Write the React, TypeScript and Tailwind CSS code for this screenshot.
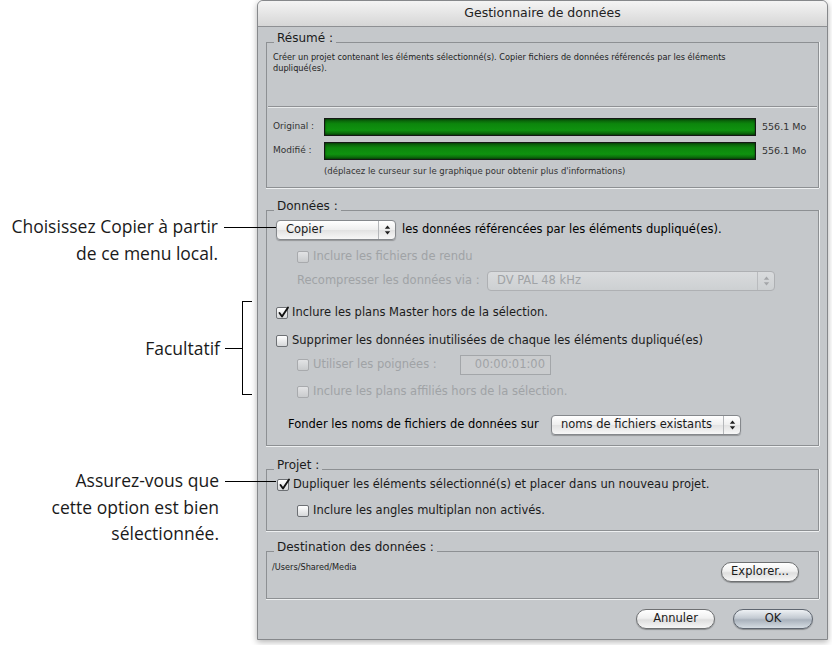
import React from "react";

// dialog font stand-in for Lucida Grande
const ui = "font-['DejaVu_Sans',sans-serif]";

function Check({ checked = false, disabled = false }: { checked?: boolean; disabled?: boolean }) {
  return (
    <span
      className={`relative inline-block w-[12px] h-[12px] shrink-0 rounded-[2px] border ${
        disabled
          ? "border-[#a8aaad] bg-[linear-gradient(to_bottom,#e2e3e5,#c9cbcd)]"
          : "border-[#6d7074] bg-[linear-gradient(to_bottom,#ffffff,#d6d8da)]"
      }`}
    >
      {checked && (
        <svg className="absolute left-[0px] top-[-2px]" width="13" height="13" viewBox="0 0 13 13">
          <path d="M2.5 7 L5 10.5 L11 1.5" stroke="#111" strokeWidth="1.9" fill="none" strokeLinecap="round" strokeLinejoin="round" />
        </svg>
      )}
    </span>
  );
}

function CheckRow({ label, checked, disabled, className = "" }: { label: string; checked?: boolean; disabled?: boolean; className?: string }) {
  return (
    <div className={`flex items-center h-[16px] gap-[4px] ${className}`}>
      <Check checked={checked} disabled={disabled} />
      <span className={`whitespace-nowrap ${disabled ? "text-[#a0a3a6]" : "text-[#1b1b1b]"}`}>{label}</span>
    </div>
  );
}

function Arrows({ disabled = false }: { disabled?: boolean }) {
  const c = disabled ? "#a3a5a8" : "#1e1e1e";
  return (
    <svg width="7" height="10" viewBox="0 0 7 10">
      <polygon points="3.5,0.5 0.8,3.8 6.2,3.8" fill={c} />
      <polygon points="0.8,6.2 6.2,6.2 3.5,9.5" fill={c} />
    </svg>
  );
}

function Popup({ label, className, disabled = false }: { label: string; className: string; disabled?: boolean }) {
  return (
    <div
      className={`flex items-stretch h-[20px] shrink-0 rounded-[4px] border ${className} ${
        disabled
          ? "border-[#aeb0b3] bg-[linear-gradient(to_bottom,#d9dbdd,#cdd0d2)] text-[#a0a3a6]"
          : "border-[#85888c] bg-[linear-gradient(to_bottom,#ffffff,#eeeeee_50%,#e2e2e2_51%,#f7f7f7)] text-[#1b1b1b] shadow-[0_1px_1px_rgba(0,0,0,0.25)]"
      }`}
    >
      <span className="flex-1 flex items-center pl-[9px] whitespace-nowrap overflow-hidden">{label}</span>
      <span className={`w-[17px] flex items-center justify-center border-l ${disabled ? "border-[#b9bbbe]" : "border-[#b5b7ba]"}`}>
        <Arrows disabled={disabled} />
      </span>
    </div>
  );
}

function PillButton({ label, className, def = false }: { label: string; className: string; def?: boolean }) {
  return (
    <div
      className={`h-[20px] flex items-center justify-center rounded-full border text-[11.5px] text-[#1b1b1b] ${className} ${
        def
          ? "border-[#5f6670] bg-[linear-gradient(to_bottom,#eef1f4,#c3cad2_45%,#a9b2bc_55%,#d5dce2)]"
          : "border-[#6e7072] bg-[linear-gradient(to_bottom,#ffffff,#f0f0f0_45%,#dedede_55%,#f6f6f6)]"
      } shadow-[0_1px_1px_rgba(0,0,0,0.3)]`}
    >
      {label}
    </div>
  );
}

function Group({ title, className = "", children }: { title: string; className?: string; children: React.ReactNode }) {
  return (
    <fieldset className={`border border-[#8d9093] shadow-[0_1px_0_#eef0f1,1px_0_0_#eef0f1] ${className}`}>
      <legend className="ml-[7px] px-[3px] pb-[8px] text-[12px] leading-[12px] text-[#1b1b1b]">{title}</legend>
      {children}
    </fieldset>
  );
}

function Meter({ label }: { label: string }) {
  return (
    <div className="flex items-center h-[18px]">
      <span className="w-[51px] text-[9px] text-[#333] whitespace-nowrap">{label}</span>
      <div className="flex-1 h-full border border-[#151815] bg-[linear-gradient(to_bottom,#095409,#0c860c_30%,#0f920f_70%,#095409)] shadow-[inset_0_0_2px_#042604]" />
      <span className="w-[56px] pl-[6px] text-[9.5px] text-[#333] whitespace-nowrap">556.1 Mo</span>
    </div>
  );
}

function Callouts() {
  return (
    <div className="w-[257px] shrink-0 flex flex-col text-right text-[17.5px] text-[#1a1a1a] font-['Open_Sans',sans-serif] relative z-10">
      <div className="mt-[213px] pr-[39px] leading-[27px]">
        <div className="relative">
          Choisissez Copier à partir
          <span className="absolute top-[14px] left-[calc(100%+6px)] w-[52px] h-px bg-black" />
        </div>
        <div>de ce menu local.</div>
      </div>

      <div className="mt-[34px] h-[94px] pr-[5px] flex items-center justify-end">
        <span>Facultatif</span>
        <span className="ml-[5px] w-[17px] h-px bg-black" />
        <span className="w-[10px] h-full border-l border-y border-black" />
      </div>

      <div className="mt-[72px] pr-[38px] leading-[26.5px]">
        <div className="relative">
          Assurez-vous que
          <span className="absolute top-[14px] left-[calc(100%+6px)] w-[51px] h-px bg-black" />
        </div>
        <div>cette option est bien</div>
        <div>sélectionnée.</div>
      </div>
    </div>
  );
}

function Window() {
  return (
    <div className={`w-[571px] h-[640px] shrink-0 flex flex-col rounded-t-[6px] border border-[#86888b] bg-[#c5c8cb] shadow-[0_2px_6px_rgba(0,0,0,0.3)] text-[11.5px] ${ui}`}>
      <div className="h-[26px] shrink-0 rounded-t-[5px] border-b border-[#8e9093] bg-[linear-gradient(to_bottom,#f4f4f4,#d6d6d6)] flex items-center justify-center text-[12.5px] text-[#222]">
        Gestionnaire de données
      </div>

      <div className="pl-[8px] pr-[8px] pt-[5px] flex flex-col">
        <Group title="Résumé :">
          <div className="px-[6px] pb-[10px]">
            <p className="text-[8.2px] leading-[11px] text-[#222] whitespace-nowrap">
              Créer un projet contenant les éléments sélectionné(s). Copier fichiers de données référencés par les éléments
              <br />
              dupliqué(es).
            </p>
            <div className="-mx-[5px] mt-[32px] h-px bg-[#8f9194] shadow-[0_1px_0_#e9ebec]" />
            <div className="mt-[11px]">
              <Meter label="Original :" />
            </div>
            <div className="mt-[6px]">
              <Meter label="Modifié :" />
            </div>
            <p className="mt-[6px] pl-[51px] text-[8.5px] leading-[11px] text-[#333] whitespace-nowrap">
              (déplacez le curseur sur le graphique pour obtenir plus d'informations)
            </p>
          </div>
        </Group>

        <Group title="Données :" className="mt-[12px]">
          <div className="px-[9px] pb-[10px]">
            <div className="flex items-center h-[20px] gap-[6px]">
              <Popup label="Copier" className="w-[120px]" />
              <span className="whitespace-nowrap">les données référencées par les éléments dupliqué(es).</span>
            </div>
            <CheckRow className="mt-[9px] ml-[21px]" label="Inclure les fichiers de rendu" disabled />
            <div className="mt-[6px] ml-[21px] flex items-center h-[20px]">
              <span className="w-[190px] text-[#a0a3a6] whitespace-nowrap">Recompresser les données via :</span>
              <Popup label="DV PAL 48 kHz" className="w-[288px]" disabled />
            </div>
            <CheckRow className="mt-[14px]" label="Inclure les plans Master hors de la sélection." checked />
            <CheckRow className="mt-[12px]" label="Supprimer les données inutilisées de chaque les éléments dupliqué(es)" />
            <div className="mt-[6px] ml-[21px] flex items-center h-[20px] gap-[4px]">
              <Check disabled />
              <span className="w-[143px] text-[#a0a3a6] whitespace-nowrap">Utiliser les poignées :</span>
              <div className="w-[91px] h-[20px] border border-[#a3a6a9] bg-[#caccce] text-[#a0a3a6] flex items-center justify-end pr-[5px]">
                00:00:01:00
              </div>
            </div>
            <CheckRow className="mt-[9px] ml-[21px]" label="Inclure les plans affiliés hors de la sélection." disabled />
            <div className="mt-[15px] ml-[12px] flex items-center h-[20px]">
              <span className="w-[263px] whitespace-nowrap">Fonder les noms de fichiers de données sur</span>
              <Popup label="noms de fichiers existants" className="w-[190px]" />
            </div>
          </div>
        </Group>

        <Group title="Projet :" className="mt-[13px]">
          <div className="px-[10px] pb-[11px]">
            <CheckRow className="-mt-[2px]" label="Dupliquer les éléments sélectionné(s) et placer dans un nouveau projet." checked />
            <CheckRow className="mt-[10px] ml-[20px]" label="Inclure les angles multiplan non activés." />
          </div>
        </Group>

        <Group title="Destination des données :" className="mt-[10px]">
          <div className="pl-[5px] pr-[19px] pb-[16px] flex justify-between items-start">
            <span className="mt-[1px] text-[8.2px] leading-[10px] text-[#222]">/Users/Shared/Media</span>
            <PillButton label="Explorer..." className="mt-[1px] w-[78px]" />
          </div>
        </Group>

        <div className="mt-[10px] mr-[6px] flex justify-end gap-[18px]">
          <PillButton label="Annuler" className="w-[79px]" />
          <PillButton label="OK" className="w-[80px]" def />
        </div>
      </div>
    </div>
  );
}

export default function App() {
  return (
    <div className="w-[832px] h-[645px] bg-white flex overflow-hidden">
      <Callouts />
      <Window />
    </div>
  );
}
